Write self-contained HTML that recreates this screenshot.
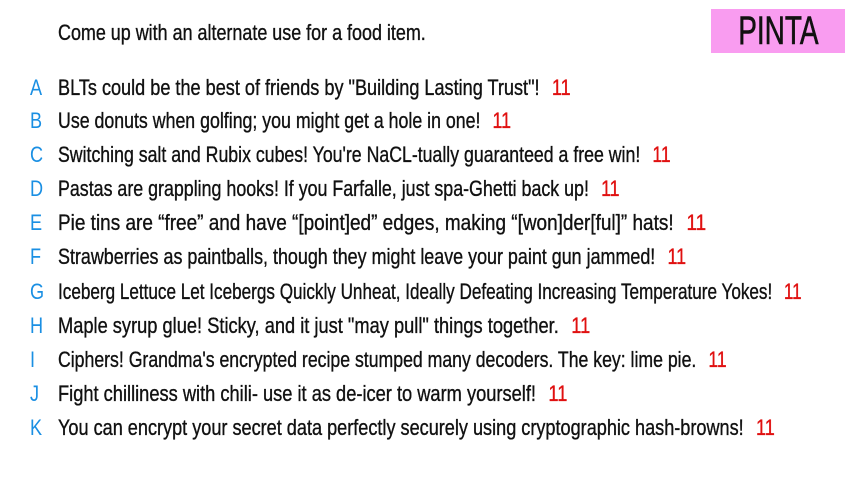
<!DOCTYPE html>
<html><head><meta charset="utf-8"><style>
body{margin:0;width:853px;height:480px;background:#fff;overflow:hidden;font-family:"Liberation Sans",sans-serif;color:#111;position:relative}
.s{display:inline-block;transform:scaleX(0.823);transform-origin:0 50%;-webkit-text-stroke:0.35px #111}
.t{position:absolute;left:58px;top:20px;font-size:22px;white-space:nowrap}
.t .s{transform:scaleX(0.815)}
.badge{position:absolute;left:711px;top:9px;width:134px;height:44px;background:#f99cf0;font-size:40px;line-height:44px;text-align:center;color:#111;}
.badge span{display:inline-block;transform:scaleX(0.7);-webkit-text-stroke:0.6px #111}
.row{position:absolute;left:0;height:34px;font-size:22px;white-space:nowrap;line-height:34px}
.l{position:absolute;left:30px;color:#1a8fe3;display:inline-block;transform:scaleX(0.823);transform-origin:0 50%}
.x{position:absolute;left:58px}
.n{color:#e01010;margin-left:15px;-webkit-text-stroke:0.35px #e01010}
</style></head><body>
<div class="t"><span class="s">Come up with an alternate use for a food item.</span></div>
<div class="badge"><span>PINTA</span></div>
<div class="row" style="top:71px"><span class="l">A</span><span class="x s">BLTs could be the best of friends by "Building Lasting Trust"!<span class="n">11</span></span></div>
<div class="row" style="top:104px"><span class="l">B</span><span class="x s" style="transform:scaleX(0.807)">Use donuts when golfing; you might get a hole in one!<span class="n">11</span></span></div>
<div class="row" style="top:138px"><span class="l">C</span><span class="x s" style="transform:scaleX(0.805)">Switching salt and Rubix cubes! You're NaCL-tually guaranteed a free win!<span class="n">11</span></span></div>
<div class="row" style="top:172px"><span class="l">D</span><span class="x s" style="transform:scaleX(0.81)">Pastas are grappling hooks! If you Farfalle, just spa-Ghetti back up!<span class="n">11</span></span></div>
<div class="row" style="top:206px"><span class="l">E</span><span class="x s" style="transform:scaleX(0.862)">Pie tins are “free” and have “[point]ed” edges, making “[won]der[ful]” hats!<span class="n">11</span></span></div>
<div class="row" style="top:240px"><span class="l">F</span><span class="x s" style="transform:scaleX(0.814)">Strawberries as paintballs, though they might leave your paint gun jammed!<span class="n">11</span></span></div>
<div class="row" style="top:275px"><span class="l">G</span><span class="x s" style="transform:scaleX(0.778)">Iceberg Lettuce Let Icebergs Quickly Unheat, Ideally Defeating Increasing Temperature Yokes!<span class="n">11</span></span></div>
<div class="row" style="top:309px"><span class="l">H</span><span class="x s" style="transform:scaleX(0.83)">Maple syrup glue! Sticky, and it just "may pull" things together.<span class="n">11</span></span></div>
<div class="row" style="top:343px"><span class="l">I</span><span class="x s" style="transform:scaleX(0.803)">Ciphers! Grandma's encrypted recipe stumped many decoders. The key: lime pie.<span class="n">11</span></span></div>
<div class="row" style="top:377px"><span class="l">J</span><span class="x s" style="transform:scaleX(0.83)">Fight chilliness with chili- use it as de-icer to warm yourself!<span class="n">11</span></span></div>
<div class="row" style="top:411px"><span class="l">K</span><span class="x s">You can encrypt your secret data perfectly securely using cryptographic hash-browns!<span class="n">11</span></span></div>
</body></html>
